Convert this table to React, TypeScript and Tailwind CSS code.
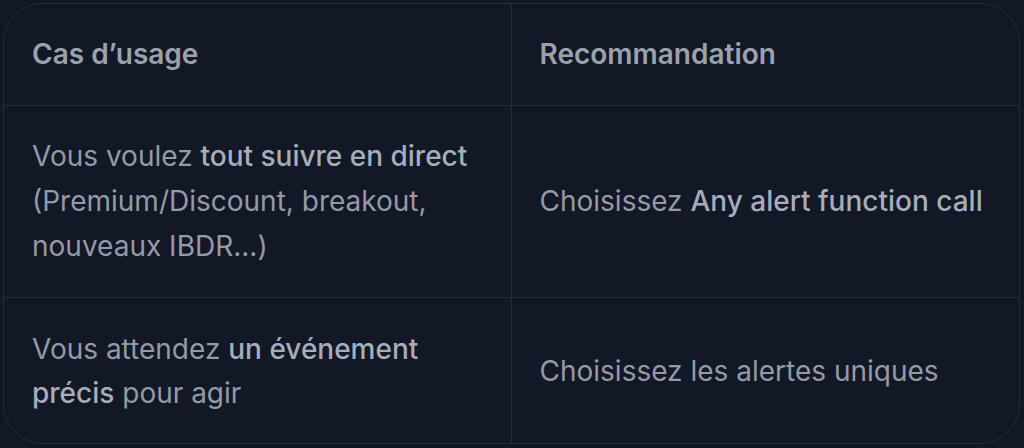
const rows = [
  {
    useCase: (
      <>
        Vous voulez <strong className="font-medium text-[#a7adb9]">tout suivre en direct</strong>{" "}
        (Premium/Discount, breakout, nouveaux IBDR...)
      </>
    ),
    reco: (
      <>
        Choisissez <strong className="font-medium text-[#a7adb9]">Any alert function call</strong>
      </>
    ),
  },
  {
    useCase: (
      <>
        Vous attendez <strong className="font-medium text-[#a7adb9]">un événement précis</strong> pour agir
      </>
    ),
    reco: <>Choisissez les alertes uniques</>,
  },
];

export default function App() {
  return (
    <div className="w-[1024px] h-[448px] bg-[#121826] pt-[3px] pl-[3px] pr-[4px] pb-[4px] font-['Inter',sans-serif] text-[28px] leading-[44.8px] text-[#949aa6]">
      <div className="h-full overflow-hidden rounded-[40px] border border-[#262c39]">
        <div className="grid grid-cols-2 border-b border-[#262c39]">
          <div className="px-[28px] py-[28px] font-semibold text-[#9ba1ad] border-r border-[#262c39]">
            Cas d’usage
          </div>
          <div className="px-[28px] py-[28px] font-semibold text-[#9ba1ad]">Recommandation</div>
        </div>
        {rows.map((r, i) => (
          <div
            key={i}
            className={`grid grid-cols-2 ${i < rows.length - 1 ? "border-b border-[#262c39]" : ""}`}
          >
            <div className="px-[28px] py-[28.5px] border-r border-[#262c39]">{r.useCase}</div>
            <div className="px-[28px] py-[28.5px] flex items-center">
              <span>{r.reco}</span>
            </div>
          </div>
        ))}
      </div>
    </div>
  );
}
